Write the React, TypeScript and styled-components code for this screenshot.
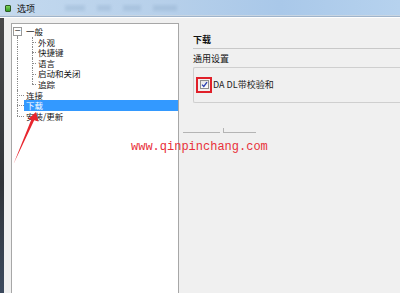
import React from "react";
import styled, { createGlobalStyle } from "styled-components";

const Global = createGlobalStyle`
  html, body {
    margin: 0;
    padding: 0;
    width: 400px;
    height: 293px;
    overflow: hidden;
    background: #f0f0f0;
  }
  * { box-sizing: border-box; }
`;

const FONT = `"Noto Sans CJK SC", "Noto Sans", sans-serif`;

type Vert = "full" | "top" | "bottom" | "none";

interface Node {
  label: string;
  depth: number;
  root: Vert;
  child?: Vert;
  box?: boolean;
  selected?: boolean;
}

const nodes: Node[] = [
  { label: "一般", depth: 0, root: "bottom", box: true },
  { label: "外观", depth: 1, root: "full", child: "full" },
  { label: "快捷键", depth: 1, root: "full", child: "full" },
  { label: "语言", depth: 1, root: "full", child: "full" },
  { label: "启动和关闭", depth: 1, root: "full", child: "full" },
  { label: "追踪", depth: 1, root: "full", child: "top" },
  { label: "连接", depth: 0, root: "full" },
  { label: "下载", depth: 0, root: "full", selected: true },
  { label: "安装/更新", depth: 0, root: "top" },
];

const App = () => {
  return (
    <>
      <Global />
      <Window>
        <TitleBar>
          <AppIcon />
          <TitleText>选项</TitleText>
          <GhostTabs>
            <Ghost w={20} />
            <Ghost w={14} />
            <Ghost w={18} />
            <Ghost w={24} />
          </GhostTabs>
        </TitleBar>
        <Body>
          <DesktopEdge />
          <TreePanel>
            {nodes.map((n) => (
              <TreeRow key={n.label}>
                <Gutter vert={n.root} horiz={n.depth === 0 && !n.box}>
                  {n.box && <Expander>−</Expander>}
                </Gutter>
                {n.depth === 1 && <ChildGutter vert={n.child || "none"} horiz />}
                <Label selected={n.selected}>{n.label}</Label>
              </TreeRow>
            ))}
          </TreePanel>
          <Content>
            <Heading>下载</Heading>
            <SubHeading>通用设置</SubHeading>
            <GroupBox>
              <CheckRow>
                <Mark>
                  <CheckBox>
                    <svg width="7" height="7" viewBox="0 0 7 7">
                      <path d="M1 3.6 L2.8 5.4 L6 1.2" stroke="#2a3fb0" strokeWidth="1.3" fill="none" />
                    </svg>
                  </CheckBox>
                </Mark>
                <CheckLabel>DA DL带校验和</CheckLabel>
              </CheckRow>
            </GroupBox>
            <Rules>
              <Rule w={37} />
              <Rule w={33} corner />
            </Rules>
          </Content>
        </Body>
        <Arrow width="60" height="80" viewBox="0 100 60 80">
          <polygon points="36,112 38.5,121.5 34.2,120.3 13.5,164 31.3,119.4 28.3,119" fill="#e8262e" />
        </Arrow>
        <Watermark>www.qinpinchang.com</Watermark>
      </Window>
    </>
  );
};

export default App;

const Window = styled.div`
  position: relative;
  width: 400px;
  height: 293px;
  display: flex;
  flex-direction: column;
  font-family: ${FONT};
  overflow: hidden;
`;

const TitleBar = styled.div`
  height: 17px;
  flex-shrink: 0;
  display: flex;
  align-items: center;
  padding-left: 5px;
  background: linear-gradient(90deg, #c3d9ef 0%, #b7d0ea 40%, #a9c8e9 70%, #b6d2ee 100%);
  border-bottom: 1px solid #9fb4cb;
  box-shadow: inset 0 -1px 0 #c9d6e3;
`;

const AppIcon = styled.span`
  width: 6px;
  height: 7px;
  background: linear-gradient(#7fd35a, #2f9a25);
  border: 1px solid #2d5a22;
  border-radius: 1px;
  margin-top: 1px;
`;

const TitleText = styled.span`
  margin-left: 6px;
  font-size: 9px;
  line-height: 17px;
  color: #111;
`;

const GhostTabs = styled.div`
  display: flex;
  gap: 12px;
  margin-left: 30px;
  filter: blur(1.5px);
  opacity: 0.2;
`;

const Ghost = styled.span<{ w: number }>`
  width: ${(p) => p.w}px;
  height: 6px;
  background: #6f8fb3;
`;

const Body = styled.div`
  flex: 1;
  display: flex;
  background: #f0f0f0;
  border-top: 1px solid #ffffff;
`;

const DesktopEdge = styled.div`
  width: 4px;
  flex-shrink: 0;
  background: linear-gradient(#4a4a4a, #303338 60%, #3c4a5e);
`;

const TreePanel = styled.div`
  width: 168px;
  margin: 5px 0 0 7px;
  background: #fff;
  border: 1px solid #a7a7a7;
  border-bottom: none;
  padding-top: 2px;
  flex-shrink: 0;
`;

const TreeRow = styled.div`
  display: flex;
  height: 10.6px;
  align-items: stretch;
`;

const guide = (vert: Vert, horiz: boolean, x: number) => `
  &::before {
    content: "";
    position: absolute;
    left: ${x}px;
    top: ${vert === "bottom" ? "50%" : "0"};
    bottom: ${vert === "top" ? "50%" : "0"};
    border-left: 1px dotted ${vert === "none" ? "transparent" : "#8a8a8a"};
  }
  &::after {
    content: "";
    position: absolute;
    left: ${x}px;
    right: 0;
    top: 50%;
    border-top: 1px dotted ${horiz ? "#8a8a8a" : "transparent"};
  }
`;

const Gutter = styled.span<{ vert: Vert; horiz: boolean }>`
  position: relative;
  width: 12px;
  flex-shrink: 0;
  ${(p) => guide(p.vert, p.horiz, 5)}
`;

const ChildGutter = styled.span<{ vert: Vert; horiz: boolean }>`
  position: relative;
  width: 12px;
  flex-shrink: 0;
  ${(p) => guide(p.vert, p.horiz, 8)}
`;

const Expander = styled.span`
  position: absolute;
  left: 1px;
  top: 1px;
  width: 9px;
  height: 9px;
  border: 1px solid #9a9a9a;
  background: #fff;
  z-index: 1;
  font-size: 8px;
  line-height: 6px;
  text-align: center;
  color: #333;
  font-family: "DejaVu Sans", sans-serif;
`;

const Label = styled.span<{ selected?: boolean }>`
  flex: ${(p) => (p.selected ? 1 : "none")};
  padding-left: 2px;
  font-size: 8.5px;
  line-height: 10.6px;
  color: ${(p) => (p.selected ? "#fff" : "#111")};
  background: ${(p) => (p.selected ? "#3399ff" : "transparent")};
  white-space: nowrap;
`;

const Content = styled.div`
  flex: 1;
  padding: 16px 0 0 14px;
  display: flex;
  flex-direction: column;
`;

const Heading = styled.div`
  font-size: 9px;
  font-weight: 700;
  line-height: 11px;
  color: #111;
  padding-bottom: 3px;
  border-bottom: 1px solid #c8c8c8;
`;

const SubHeading = styled.div`
  font-size: 9px;
  line-height: 11px;
  color: #111;
  margin-top: 4px;
`;

const GroupBox = styled.div`
  margin-top: 2.5px;
  height: 36px;
  border: 1px solid #cfcfcf;
  border-right: none;
  border-radius: 2px 0 0 2px;
  padding: 9px 0 0 2px;
`;

const CheckRow = styled.div`
  display: flex;
  align-items: center;
`;

const Mark = styled.span`
  width: 16px;
  height: 16px;
  border: 2px solid #e0202a;
  display: flex;
  align-items: center;
  justify-content: center;
`;

const CheckBox = styled.span`
  width: 9px;
  height: 9px;
  border: 1px solid #8f8f8f;
  background: linear-gradient(#e6e6e6, #fdfdfd);
  display: flex;
  align-items: center;
  justify-content: center;
`;

const CheckLabel = styled.span`
  margin-left: 1px;
  font-size: 9px;
  color: #222;
  white-space: nowrap;
`;

const Rules = styled.div`
  display: flex;
  gap: 3px;
  margin: 25px 0 0 -10px;
  align-items: flex-end;
`;

const Rule = styled.span<{ w: number; corner?: boolean }>`
  width: ${(p) => p.w}px;
  height: ${(p) => (p.corner ? 5 : 1)}px;
  border-bottom: 1px solid #b4b4b4;
  border-left: ${(p) => (p.corner ? "1px solid #b4b4b4" : "none")};
`;

const Arrow = styled.svg`
  position: absolute;
  left: 0;
  top: 100px;
`;

const Watermark = styled.div`
  position: absolute;
  left: 131px;
  top: 139px;
  font-family: "Liberation Mono", monospace;
  font-size: 12px;
  line-height: 16px;
  color: #e8303a;
  white-space: nowrap;
`;
